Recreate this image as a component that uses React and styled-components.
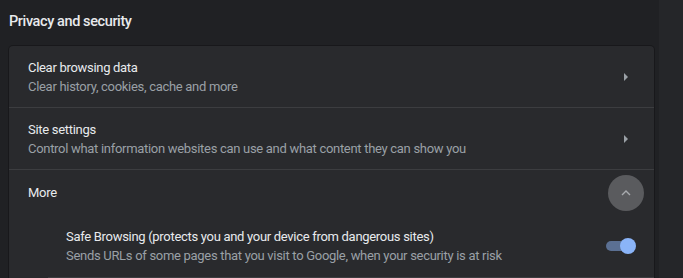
import styled, { createGlobalStyle } from "styled-components";

const GlobalStyle = createGlobalStyle`
  html, body {
    margin: 0;
    padding: 0;
    background: #202124;
    font-family: Roboto, "Noto Sans", "Liberation Sans", sans-serif;
    -webkit-font-smoothing: antialiased;
  }
`;

const Page = styled.div`
  display: flex;
  width: 683px;
  height: 278px;
  overflow: hidden;
  background: #202124;
`;

const Main = styled.main`
  width: 645px;
  margin-left: 9px;
  flex-shrink: 0;
`;

const Gutter = styled.div`
  margin-left: 5px;
  flex: 1;
  background: #252629;
`;

const Heading = styled.h2`
  margin: 0;
  padding-top: 12px;
  height: 34px;
  font-size: 14.5px;
  letter-spacing: -0.4px;
  line-height: 20px;
  font-weight: 500;
  color: #e8eaed;
`;

const Card = styled.section`
  background: #292a2d;
  border-radius: 4px 4px 0 0;
  box-shadow: 0 0 0 1px rgba(0, 0, 0, 0.25);
`;

const Row = styled.div`
  display: flex;
  align-items: center;
  height: ${(p) => p.$height || 61}px;
  padding: 0 ${(p) => p.$right || 26}px 0 ${(p) => p.$left || 19}px;
  border-top: ${(p) => (p.$divider ? "1px solid #3c3d40" : "none")};
  box-sizing: border-box;
`;

const Text = styled.div`
  flex: 1;
  display: flex;
  flex-direction: column;
`;

const Title = styled.div`
  font-size: 13px;
  letter-spacing: -0.3px;
  line-height: 19px;
  color: #e8eaed;
`;

const Sub = styled.div`
  font-size: 13px;
  letter-spacing: -0.3px;
  line-height: 19px;
  color: #9aa0a6;
`;

const Arrow = styled.span`
  width: 0;
  height: 0;
  border-top: 4px solid transparent;
  border-bottom: 4px solid transparent;
  border-left: 4px solid #9aa0a6;
`;

const RoundButton = styled.button`
  width: 36px;
  height: 36px;
  border-radius: 50%;
  border: none;
  padding: 0;
  margin-right: -16px;
  background: #5a5b5e;
  display: flex;
  align-items: center;
  justify-content: center;
`;

const SubSection = styled.div`
  margin-left: 39px;
  border-bottom: 1px solid #3c3d40;
`;

const Toggle = styled.div`
  position: relative;
  width: 30px;
  height: 16px;
  display: flex;
  align-items: center;
`;

const Track = styled.span`
  width: 24px;
  height: 10px;
  border-radius: 5px;
  background: #5b7093;
`;

const Knob = styled.span`
  position: absolute;
  right: 0;
  top: 0;
  width: 16px;
  height: 16px;
  border-radius: 50%;
  background: #8ab4f8;
`;

export default function App() {
  return (
    <Page>
      <GlobalStyle />
      <Main>
        <Heading>Privacy and security</Heading>
        <Card>
          <Row>
            <Text>
              <Title>Clear browsing data</Title>
              <Sub>Clear history, cookies, cache and more</Sub>
            </Text>
            <Arrow />
          </Row>
          <Row $divider $height={62}>
            <Text>
              <Title>Site settings</Title>
              <Sub>Control what information websites can use and what content they can show you</Sub>
            </Text>
            <Arrow />
          </Row>
          <Row $divider $height={46}>
            <Text>
              <Title>More</Title>
            </Text>
            <RoundButton aria-label="Collapse">
              <svg width="10" height="6" viewBox="0 0 10 6">
                <path d="M1 5 L5 1 L9 5" fill="none" stroke="#a8abaf" strokeWidth="1.4" />
              </svg>
            </RoundButton>
          </Row>
          <SubSection>
            <Row $left={18} $right={18} $height={62}>
              <Text>
                <Title>Safe Browsing (protects you and your device from dangerous sites)</Title>
                <Sub>Sends URLs of some pages that you visit to Google, when your security is at risk</Sub>
              </Text>
              <Toggle>
                <Track />
                <Knob />
              </Toggle>
            </Row>
          </SubSection>
        </Card>
      </Main>
      <Gutter />
    </Page>
  );
}
